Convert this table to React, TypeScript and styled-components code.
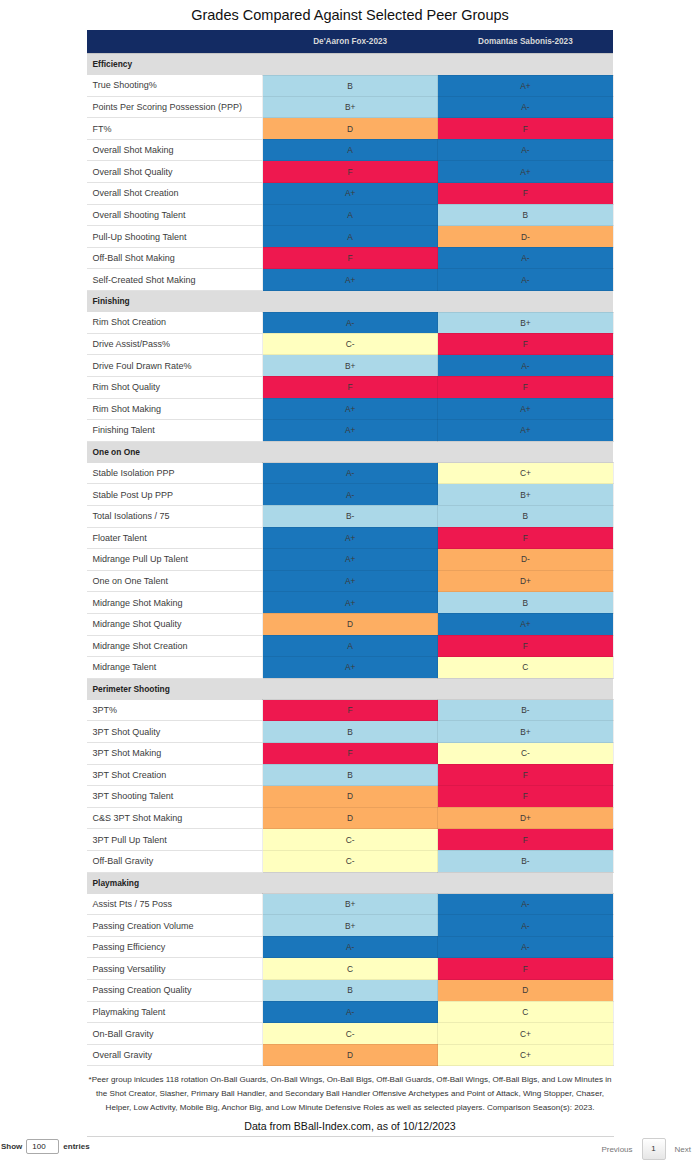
import styled, { createGlobalStyle } from "styled-components";

const GlobalStyle = createGlobalStyle`
  body {
    margin: 0;
    background: #fff;
    font-family: "Liberation Sans", Arial, sans-serif;
    color: #333;
  }
`;

type Grade = "A+" | "A" | "A-" | "B+" | "B" | "B-" | "C+" | "C" | "C-" | "D+" | "D" | "D-" | "F";

const gradeColor = (g: Grade) => {
  switch (g[0]) {
    case "A":
      return "#1a76bb";
    case "B":
      return "#abd8e8";
    case "C":
      return "#ffffbf";
    case "D":
      return "#fdae62";
    default:
      return "#ee184f";
  }
};

const sections: { title: string; rows: [string, Grade, Grade][] }[] = [
  {
    title: "Efficiency",
    rows: [
      ["True Shooting%", "B", "A+"],
      ["Points Per Scoring Possession (PPP)", "B+", "A-"],
      ["FT%", "D", "F"],
      ["Overall Shot Making", "A", "A-"],
      ["Overall Shot Quality", "F", "A+"],
      ["Overall Shot Creation", "A+", "F"],
      ["Overall Shooting Talent", "A", "B"],
      ["Pull-Up Shooting Talent", "A", "D-"],
      ["Off-Ball Shot Making", "F", "A-"],
      ["Self-Created Shot Making", "A+", "A-"],
    ],
  },
  {
    title: "Finishing",
    rows: [
      ["Rim Shot Creation", "A-", "B+"],
      ["Drive Assist/Pass%", "C-", "F"],
      ["Drive Foul Drawn Rate%", "B+", "A-"],
      ["Rim Shot Quality", "F", "F"],
      ["Rim Shot Making", "A+", "A+"],
      ["Finishing Talent", "A+", "A+"],
    ],
  },
  {
    title: "One on One",
    rows: [
      ["Stable Isolation PPP", "A-", "C+"],
      ["Stable Post Up PPP", "A-", "B+"],
      ["Total Isolations / 75", "B-", "B"],
      ["Floater Talent", "A+", "F"],
      ["Midrange Pull Up Talent", "A+", "D-"],
      ["One on One Talent", "A+", "D+"],
      ["Midrange Shot Making", "A+", "B"],
      ["Midrange Shot Quality", "D", "A+"],
      ["Midrange Shot Creation", "A", "F"],
      ["Midrange Talent", "A+", "C"],
    ],
  },
  {
    title: "Perimeter Shooting",
    rows: [
      ["3PT%", "F", "B-"],
      ["3PT Shot Quality", "B", "B+"],
      ["3PT Shot Making", "F", "C-"],
      ["3PT Shot Creation", "B", "F"],
      ["3PT Shooting Talent", "D", "F"],
      ["C&S 3PT Shot Making", "D", "D+"],
      ["3PT Pull Up Talent", "C-", "F"],
      ["Off-Ball Gravity", "C-", "B-"],
    ],
  },
  {
    title: "Playmaking",
    rows: [
      ["Assist Pts / 75 Poss", "B+", "A-"],
      ["Passing Creation Volume", "B+", "A-"],
      ["Passing Efficiency", "A-", "A-"],
      ["Passing Versatility", "C", "F"],
      ["Passing Creation Quality", "B", "D"],
      ["Playmaking Talent", "A-", "C"],
      ["On-Ball Gravity", "C-", "C+"],
      ["Overall Gravity", "D", "C+"],
    ],
  },
];

const Page = styled.div`
  width: 700px;
  padding-top: 5px;
`;

const Title = styled.h1`
  margin: 0;
  font-size: 14.5px;
  font-weight: normal;
  text-align: center;
  color: #111;
  line-height: 20px;
`;

const Table = styled.table`
  width: 527px;
  margin: 5px auto 0;
  border-collapse: collapse;
  table-layout: fixed;
  font-size: 8.4px;
`;

const HeadCell = styled.th`
  background: #132b63;
  color: #d9d9d9;
  font-size: 8.2px;
  font-weight: bold;
  text-align: center;
  height: 23px;
  padding: 0;
`;

const SectionCell = styled.td`
  background: #dddddd;
  font-weight: bold;
  color: #222;
  height: 20.6px;
  padding: 0 0 0 6px;
  border-top: 1px solid #c4c4c4;
`;

const LabelCell = styled.td`
  height: 20.6px;
  padding: 0 0 0 6px;
  font-size: 9px;
  color: #3c3c3c;
  border-bottom: 1px solid #e2e2e2;
  white-space: nowrap;
`;

const GradeCell = styled.td<{ $grade: Grade }>`
  background: ${(p) => gradeColor(p.$grade)};
  text-align: center;
  color: #3a3a3a;
  padding: 0;
  border: 1px solid rgba(0, 0, 0, 0.07);
`;

const Note = styled.p`
  width: 529px;
  margin: 7px auto 0;
  font-size: 8.1px;
  line-height: 14px;
  text-align: center;
  color: #333;
`;

const Source = styled.p`
  margin: 4px 0 0;
  font-size: 10.6px;
  line-height: 14px;
  text-align: center;
  color: #111;
`;

const Rule = styled.div`
  width: 527px;
  margin: 3px auto 0;
  border-top: 1px solid #d4d4d4;
`;

const Controls = styled.div`
  display: flex;
  justify-content: space-between;
  align-items: flex-start;
  padding: 1px 9px 0 1px;
  font-size: 8px;
`;

const Length = styled.label`
  display: flex;
  align-items: center;
  gap: 4px;
  margin-top: 1px;
  font-weight: bold;
  color: #333;
`;

const LengthInput = styled.span`
  display: inline-block;
  width: 26px;
  height: 13px;
  line-height: 13px;
  padding-left: 5px;
  border: 1px solid #aaa;
  border-radius: 2px;
  font-weight: normal;
  color: #222;
`;

const Pager = styled.div`
  display: flex;
  align-items: center;
  gap: 9px;
  color: #777;
`;

const PageButton = styled.span`
  width: 22px;
  height: 20px;
  line-height: 20px;
  text-align: center;
  border: 1px solid #cfcfcf;
  border-radius: 2px;
  background: linear-gradient(#fff, #e6e6e6);
  color: #333;
`;

export default function App() {
  return (
    <Page>
      <GlobalStyle />
      <Title>Grades Compared Against Selected Peer Groups</Title>
      <Table>
        <colgroup>
          <col style={{ width: 176 }} />
          <col />
          <col />
        </colgroup>
        <thead>
          <tr>
            <HeadCell />
            <HeadCell>De'Aaron Fox-2023</HeadCell>
            <HeadCell>Domantas Sabonis-2023</HeadCell>
          </tr>
        </thead>
        <tbody>
          {sections.map((s) => (
            <>
              <tr key={s.title}>
                <SectionCell colSpan={3}>{s.title}</SectionCell>
              </tr>
              {s.rows.map(([label, a, b]) => (
                <tr key={s.title + label}>
                  <LabelCell>{label}</LabelCell>
                  <GradeCell $grade={a}>{a}</GradeCell>
                  <GradeCell $grade={b}>{b}</GradeCell>
                </tr>
              ))}
            </>
          ))}
        </tbody>
      </Table>
      <Note>
        *Peer group inlcudes 118 rotation On-Ball Guards, On-Ball Wings, On-Ball Bigs, Off-Ball Guards, Off-Ball
        Wings, Off-Ball Bigs, and Low Minutes in the Shot Creator, Slasher, Primary Ball Handler, and Secondary Ball
        Handler Offensive Archetypes and Point of Attack, Wing Stopper, Chaser, Helper, Low Activity, Mobile Big,
        Anchor Big, and Low Minute Defensive Roles as well as selected players. Comparison Season(s): 2023.
      </Note>
      <Source>Data from BBall-Index.com, as of 10/12/2023</Source>
      <Rule />
      <Controls>
        <Length>
          Show <LengthInput>100</LengthInput> entries
        </Length>
        <Pager>
          <span>Previous</span>
          <PageButton>1</PageButton>
          <span>Next</span>
        </Pager>
      </Controls>
    </Page>
  );
}
